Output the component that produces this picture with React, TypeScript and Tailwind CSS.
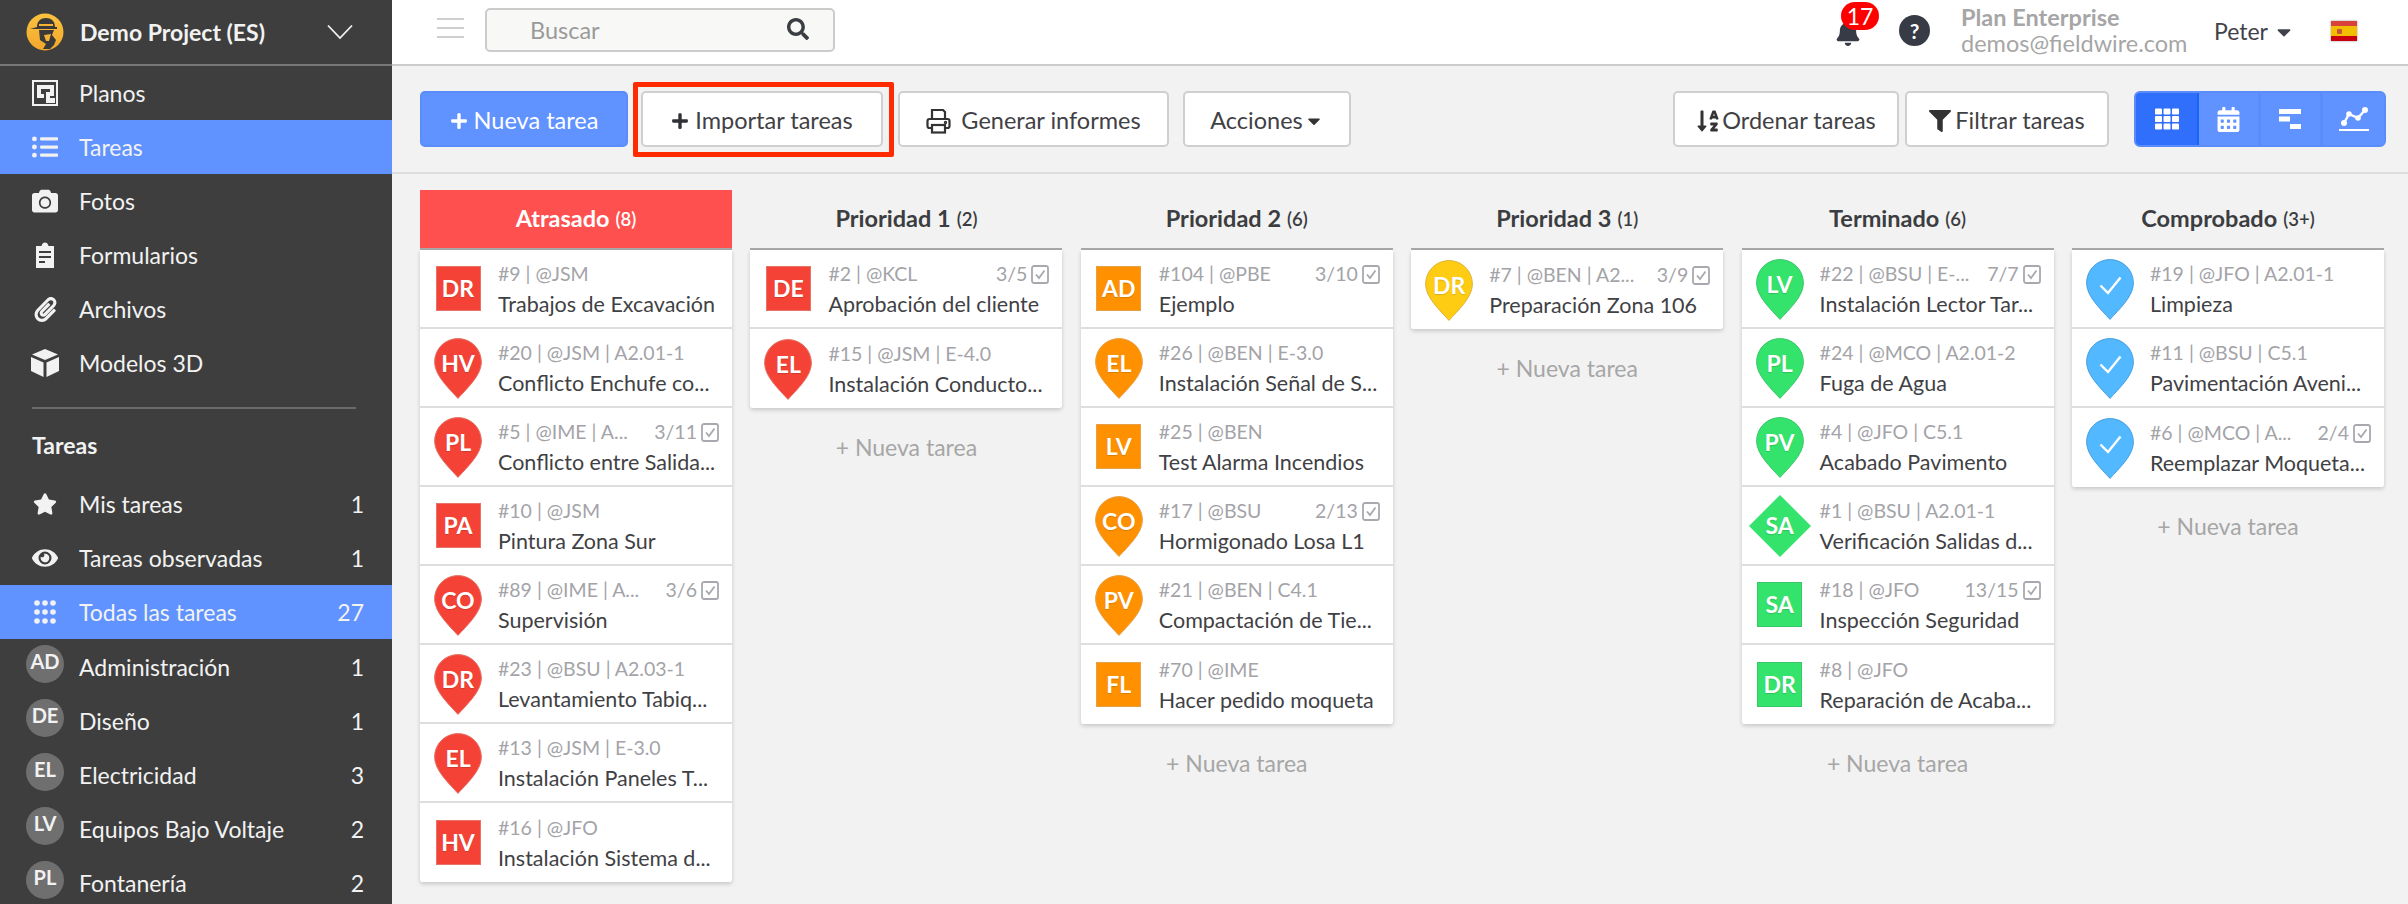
import React from "react";
import { FaListUl, FaCamera, FaPaperclip, FaStar, FaEye, FaBell, FaFilter, FaSearch, FaTh, FaCalendarAlt, FaSortAlphaDown, FaPlus, FaCaretDown } from "react-icons/fa";

type Task = { k: "s" | "p" | "d" | "c"; l: string; m: string; t: string; c?: string };
type Col = { title: string; count: string; color: string; edge: string; tasks: Task[]; red?: boolean };

const cols: Col[] = [
  { title: "Atrasado", count: "(8)", color: "#f44336", edge: "#e57368", red: true, tasks: [
    { k: "s", l: "DR", m: "#9 | @JSM", t: "Trabajos de Excavación" },
    { k: "p", l: "HV", m: "#20 | @JSM | A2.01-1", t: "Conflicto Enchufe co..." },
    { k: "p", l: "PL", m: "#5 | @IME | A...", c: "3/11", t: "Conflicto entre Salida..." },
    { k: "s", l: "PA", m: "#10 | @JSM", t: "Pintura Zona Sur" },
    { k: "p", l: "CO", m: "#89 | @IME | A...", c: "3/6", t: "Supervisión" },
    { k: "p", l: "DR", m: "#23 | @BSU | A2.03-1", t: "Levantamiento Tabiq..." },
    { k: "p", l: "EL", m: "#13 | @JSM | E-3.0", t: "Instalación Paneles T..." },
    { k: "s", l: "HV", m: "#16 | @JFO", t: "Instalación Sistema d..." },
  ]},
  { title: "Prioridad 1", count: "(2)", color: "#f44336", edge: "#e57368", tasks: [
    { k: "s", l: "DE", m: "#2 | @KCL", c: "3/5", t: "Aprobación del cliente" },
    { k: "p", l: "EL", m: "#15 | @JSM | E-4.0", t: "Instalación Conducto..." },
  ]},
  { title: "Prioridad 2", count: "(6)", color: "#ff9100", edge: "#e6a04a", tasks: [
    { k: "s", l: "AD", m: "#104 | @PBE", c: "3/10", t: "Ejemplo" },
    { k: "p", l: "EL", m: "#26 | @BEN | E-3.0", t: "Instalación Señal de S..." },
    { k: "s", l: "LV", m: "#25 | @BEN", t: "Test Alarma Incendios" },
    { k: "p", l: "CO", m: "#17 | @BSU", c: "2/13", t: "Hormigonado Losa L1" },
    { k: "p", l: "PV", m: "#21 | @BEN | C4.1", t: "Compactación de Tie..." },
    { k: "s", l: "FL", m: "#70 | @IME", t: "Hacer pedido moqueta" },
  ]},
  { title: "Prioridad 3", count: "(1)", color: "#ffcc14", edge: "#dcb43c", tasks: [
    { k: "p", l: "DR", m: "#7 | @BEN | A2...", c: "3/9", t: "Preparación Zona 106" },
  ]},
  { title: "Terminado", count: "(6)", color: "#34e36c", edge: "#3ac76a", tasks: [
    { k: "p", l: "LV", m: "#22 | @BSU | E-...", c: "7/7", t: "Instalación Lector Tar..." },
    { k: "p", l: "PL", m: "#24 | @MCO | A2.01-2", t: "Fuga de Agua" },
    { k: "p", l: "PV", m: "#4 | @JFO | C5.1", t: "Acabado Pavimento" },
    { k: "d", l: "SA", m: "#1 | @BSU | A2.01-1", t: "Verificación Salidas d..." },
    { k: "s", l: "SA", m: "#18 | @JFO", c: "13/15", t: "Inspección Seguridad" },
    { k: "s", l: "DR", m: "#8 | @JFO", t: "Reparación de Acaba..." },
  ]},
  { title: "Comprobado", count: "(3+)", color: "#52b8ff", edge: "#4a9fe0", tasks: [
    { k: "c", l: "", m: "#19 | @JFO | A2.01-1", t: "Limpieza" },
    { k: "c", l: "", m: "#11 | @BSU | C5.1", t: "Pavimentación Aveni..." },
    { k: "c", l: "", m: "#6 | @MCO | A...", c: "2/4", t: "Reemplazar Moqueta..." },
  ]},
];

function PinShape({ color, edge }: { color: string; edge: string }) {
  return (
    <svg width="48" height="61" viewBox="0 0 48 61" className="block">
      <path d="M24 .6C37 .6 47.4 11 47.4 24.2 47.4 37.5 32.5 51 24 60.4 15.5 51 .6 37.5 .6 24.2 .6 11 11 .6 24 .6Z" fill={color} stroke={edge} strokeWidth="1" />
    </svg>
  );
}

function Marker({ t, color, edge }: { t: Task; color: string; edge: string }) {
  const label = "text-white font-bold text-[23px] leading-none [text-shadow:0_1px_1px_rgba(0,0,0,0.15)]";
  if (t.k === "s") {
    return (
      <div className={`w-[45px] h-[45px] flex items-center justify-center border ${label}`} style={{ background: color, borderColor: edge }}>
        {t.l}
      </div>
    );
  }
  if (t.k === "d") {
    return (
      <div className="relative w-[62px] h-[62px]">
        <svg width="62" height="62" viewBox="0 0 62 62" className="block">
          <path d="M31 0 62 31 31 62 0 31Z" fill={color} />
        </svg>
        <div className={`absolute inset-0 flex items-center justify-center ${label}`}>{t.l}</div>
      </div>
    );
  }
  return (
    <div className="relative w-[48px] h-[61px] mt-[2px]">
      <PinShape color={color} edge={edge} />
      {t.k === "c" ? (
        <svg className="absolute left-[13px] top-[17px]" width="23" height="19" viewBox="0 0 23 19" fill="none" stroke="#fff" strokeWidth="2.4">
          <path d="M1.5 9.5 9 17 21.5 1.5" />
        </svg>
      ) : (
        <div className={`absolute inset-x-0 top-0 h-[50px] flex items-center justify-center ${label}`}>{t.l}</div>
      )}
    </div>
  );
}

function CheckBox() {
  return (
    <svg width="18" height="19" viewBox="0 0 18 19" fill="none" className="ml-[4px] shrink-0">
      <rect x="1" y="1" width="16" height="17" rx="2" stroke="#a8a8ae" strokeWidth="1.8" />
      <path d="M5 9.5 8 13 13.5 5.5" stroke="#a8a8ae" strokeWidth="1.8" />
    </svg>
  );
}

function Card({ t, col, last }: { t: Task; col: Col; last: boolean }) {
  return (
    <div className={`h-[79px] bg-white flex items-center ${last ? "" : "border-b-2 border-[#dedede]"}`}>
      <div className="w-[78px] shrink-0 flex justify-center -translate-x-[1px]">
        <Marker t={t} color={col.color} edge={col.edge} />
      </div>
      <div className="flex-1 min-w-0 pr-[13px] pt-[3px]">
        <div className="flex items-center justify-between h-[24px] text-[19.5px] text-[#a3a3a8] whitespace-nowrap">
          <span>{t.m}</span>
          {t.c && (
            <span className="flex items-center">
              {t.c}
              <CheckBox />
            </span>
          )}
        </div>
        <div className="mt-[4px] h-[28px] leading-[28px] text-[21.5px] text-[#3f4144] whitespace-nowrap">{t.t}</div>
      </div>
    </div>
  );
}

function Column({ col }: { col: Col }) {
  return (
    <div className="min-w-0">
      <div className={`h-[60px] border-b-2 border-[#a9a9a9] flex items-center justify-center gap-[6px] ${col.red ? "bg-[#ff5050] text-white" : "text-[#3b3d40]"}`}>
        <span className="text-[23.5px] font-bold">{col.title}</span>
        <span className="text-[18.5px] font-semibold pt-[2px]">{col.count}</span>
      </div>
      <div className="rounded-b-[3px] overflow-hidden shadow-[0_2px_4px_rgba(0,0,0,0.18)]">
        {col.tasks.map((t, i) => (
          <Card key={i} t={t} col={col} last={i === col.tasks.length - 1} />
        ))}
      </div>
      <div className="mt-[24px] text-center text-[23px] leading-[30px] text-[#a6a6a6]">+ Nueva tarea</div>
    </div>
  );
}

function PlanIcon() {
  return (
    <svg width="26" height="26" viewBox="0 0 26 26">
      <rect x="1" y="1" width="24" height="24" fill="none" stroke="#f2f2f2" strokeWidth="2" />
      <path d="M5 5H22V16H18V23H14V12H18V9H9V14H12V18H5Z" fill="#f2f2f2" />
      <rect x="18" y="18" width="5" height="5" fill="#f2f2f2" />
    </svg>
  );
}

function ClipIcon() {
  return (
    <svg width="20" height="26" viewBox="0 0 20 26">
      <path fillRule="evenodd" d="M1 4H6.5C7 1.5 8.5.5 10 .5S13 1.5 13.5 4H19V26H1ZM4 9V11H16V9ZM4 14V16H16V14ZM4 19V21H10V19Z" fill="#f2f2f2" />
    </svg>
  );
}

function CubeIcon() {
  return (
    <svg width="28" height="28" viewBox="0 0 28 28" fill="#f2f2f2">
      <path d="M14 0 27 5.5 14 11 1 5.5Z" />
      <path d="M0 8 12.5 13.5V28L0 22Z" />
      <path d="M28 8 15.5 13.5V28L28 22Z" />
    </svg>
  );
}

function DotsIcon() {
  return (
    <svg width="22" height="24" viewBox="0 0 22 24" fill="#f2f2f2">
      {[3, 12, 21].map((y) => [3, 11, 19].map((x) => <circle key={`${x}-${y}`} cx={x} cy={y} r="2.8" />))}
    </svg>
  );
}

function PrinterIcon() {
  return (
    <svg width="25" height="26" viewBox="0 0 25 26" fill="none" stroke="#333" strokeWidth="2.2">
      <path d="M6 11V2H17L19 4V11" />
      <rect x="1.500" y="11" width="22" height="9" rx="2" />
      <rect x="6" y="17" width="13" height="7.500" fill="#fff" />
      <circle cx="19.500" cy="14.500" r=".6" fill="#333" />
    </svg>
  );
}

function NavRow({ icon, label, count, active, avatar }: { icon?: React.ReactNode; label: string; count?: string; active?: boolean; avatar?: boolean }) {
  return (
    <div className={`h-[54px] shrink-0 flex items-center pr-[28px] text-[23px] text-[#f2f2f2] ${active ? "bg-[#6093ff]" : ""}`}>
      {avatar ? (
        <div className="ml-[26px] w-[38px] h-[38px] -translate-y-[2px] rounded-full bg-[#6f6f6f] flex justify-center pt-[5px] text-[20px] leading-[22px] font-bold shrink-0">
          {icon}
        </div>
      ) : (
        <div className="ml-[26px] w-[38px] flex justify-center shrink-0">{icon}</div>
      )}
      <span className={`ml-[15px] flex-1 whitespace-nowrap ${avatar ? "pt-[2px]" : ""}`}>{label}</span>
      {count && <span className={avatar ? "pt-[2px]" : ""}>{count}</span>}
    </div>
  );
}

function Btn({ w, ml, children }: { w: string; ml: string; children: React.ReactNode }) {
  return (
    <div className={`${w} ${ml} h-[56px] shrink-0 bg-white border-2 border-[#cfcfcf] rounded-[5px] flex items-center justify-center gap-[6px] pt-[3px] text-[23.5px] text-[#3f4144] whitespace-nowrap`}>
      {children}
    </div>
  );
}

function GanttIcon() {
  return (
    <svg width="23" height="20" viewBox="0 0 23 20" fill="#fff">
      <rect x="0" y="0" width="22" height="5" />
      <rect x="0" y="7.500" width="11" height="5" />
      <rect x="11" y="15" width="11" height="5" />
    </svg>
  );
}

function ChartIcon() {
  return (
    <svg width="30" height="25" viewBox="0 0 30 25" fill="#fff">
      <path d="M5 16 10 7 19 11 26 3" fill="none" stroke="#fff" strokeWidth="2.4" />
      <circle cx="5" cy="16" r="3" />
      <circle cx="10" cy="7" r="2.8" />
      <circle cx="19" cy="11" r="2.8" />
      <circle cx="26" cy="3" r="3" />
      <rect x="0" y="22" width="30" height="2" />
    </svg>
  );
}

function Logo() {
  return (
    <svg width="38" height="38" viewBox="0 0 38 38" className="shrink-0">
      <defs>
        <linearGradient id="lg" x1="0" y1="0" x2="0" y2="1">
          <stop offset="0" stopColor="#fcc23e" />
          <stop offset="1" stopColor="#f2a72c" />
        </linearGradient>
      </defs>
      <circle cx="19" cy="19" r="18.500" fill="url(#lg)" />
      <path d="M11 14C11 8 15 5 20 5S29 8 29 14H31V16H4L11 14Z" fill="#3a3a3a" />
      <rect x="13" y="11" width="14" height="2" fill="#f5b233" />
      <path d="M13 17H28L26 22 30 27 28 32 24 36H17L20 31 14 27Z" fill="#3a3a3a" />
      <path d="M18 22 25 21 23 28 20 28Z" fill="#f5b233" />
    </svg>
  );
}

function Flag() {
  return (
    <svg width="26" height="20" viewBox="0 0 26 20" className="drop-shadow-[0_0_1px_rgba(0,0,0,0.4)]">
      <rect width="26" height="20" fill="#f1bf00" />
      <rect width="26" height="5" fill="#d9423a" />
      <rect y="15" width="26" height="5" fill="#c8000f" />
      <rect x="6" y="8" width="5" height="5" rx="1" fill="#c8553a" />
    </svg>
  );
}

export default function App() {
  return (
    <div className="w-[2408px] h-[904px] overflow-hidden flex font-[Lato,sans-serif] bg-[#f2f2f2]">
      <aside className="w-[392px] shrink-0 h-full bg-[#3e3e3e] flex flex-col overflow-hidden">
        <div className="h-[66px] shrink-0 border-b-2 border-[#777777] flex items-center pl-[26px] pr-[39px]">
          <Logo />
          <span className="ml-[16px] flex-1 text-[23px] font-bold text-[#f2f2f2] whitespace-nowrap">Demo Project (ES)</span>
          <svg width="26" height="16" viewBox="0 0 26 16" fill="none" stroke="#f2f2f2" strokeWidth="1.800">
            <path d="M1 1.500 13 14 25 1.500" />
          </svg>
        </div>
        <NavRow icon={<PlanIcon />} label="Planos" />
        <NavRow icon={<FaListUl size={26} />} label="Tareas" active />
        <NavRow icon={<FaCamera size={26} />} label="Fotos" />
        <NavRow icon={<ClipIcon />} label="Formularios" />
        <NavRow icon={<FaPaperclip size={25} />} label="Archivos" />
        <NavRow icon={<CubeIcon />} label="Modelos 3D" />
        <div className="mt-[17px] ml-[32px] mr-[36px] h-[2px] shrink-0 bg-[#6b6b6b]" />
        <div className="h-[68px] shrink-0 flex items-center pl-[32px] pt-[5px] text-[23px] font-bold text-[#f2f2f2]">Tareas</div>
        <NavRow icon={<FaStar size={24} />} label="Mis tareas" count="1" />
        <NavRow icon={<FaEye size={26} />} label="Tareas observadas" count="1" />
        <NavRow icon={<DotsIcon />} label="Todas las tareas" count="27" active />
        <NavRow avatar icon="AD" label="Administración" count="1" />
        <NavRow avatar icon="DE" label="Diseño" count="1" />
        <NavRow avatar icon="EL" label="Electricidad" count="3" />
        <NavRow avatar icon="LV" label="Equipos Bajo Voltaje" count="2" />
        <NavRow avatar icon="PL" label="Fontanería" count="2" />
      </aside>

      <main className="flex-1 min-w-0 flex flex-col">
        <header className="h-[66px] shrink-0 bg-white border-b-2 border-[#cccccc] flex items-center">
          <div className="ml-[45px] w-[27px] h-[20px] flex flex-col justify-between -mt-[8px]">
            <div className="h-[2px] bg-[#cfcfcf]" />
            <div className="h-[2px] bg-[#cfcfcf]" />
            <div className="h-[2px] bg-[#cfcfcf]" />
          </div>
          <div className="ml-[21px] w-[350px] h-[44px] -mt-[4px] bg-[#f8f8f6] border-2 border-[#cccccc] rounded-[5px] flex items-center pl-[43px] pr-[24px] justify-between">
            <span className="text-[23.5px] text-[#9a9a9a] pt-[2px]">Buscar</span>
            <FaSearch size={22} className="text-[#3a3d42] -mt-[3px]" />
          </div>
          <div className="ml-auto relative w-[26px] h-[28px] mr-[38px]">
            <FaBell size={26} className="text-[#373b45] absolute left-0 top-[2px]" />
            <div className="absolute left-[6px] -top-[16px] w-[38px] h-[28px] rounded-[14px] bg-[#ff0000] text-white text-[23px] leading-[28px] text-center">17</div>
          </div>
          <div className="w-[31px] h-[31px] -mt-[3px] rounded-full bg-[#373b45] text-white text-[21px] font-bold flex items-center justify-center">?</div>
          <div className="ml-[31px] w-[253px] -mt-[4px] flex flex-col">
            <span className="text-[23.5px] leading-[26px] font-bold text-[#a6a6a6]">Plan Enterprise</span>
            <span className="text-[23.5px] leading-[26px] text-[#a6a6a6]">demos@fieldwire.com</span>
          </div>
          <span className="text-[23px] text-[#3f4349] -mt-[1px]">Peter</span>
          <FaCaretDown size={22} className="ml-[5px] text-[#3f4349]" />
          <div className="ml-[36px] mr-[51px] -mt-[3px]"><Flag /></div>
        </header>

        <div className="h-[108px] shrink-0 border-b-2 border-[#dddddd] flex items-center pl-[28px]">
          <div className="w-[208px] h-[56px] shrink-0 bg-[#6093ff] border-2 border-[#5a8cfa] rounded-[5px] flex items-center justify-center gap-[6px] pt-[3px] text-[23.5px] text-white whitespace-nowrap">
            <FaPlus size={18} />
            Nueva tarea
          </div>
          <div className="relative ml-[13px]">
            <Btn w="w-[242px]" ml="">
              <FaPlus size={18} className="text-[#2f3136]" />
              Importar tareas
            </Btn>
            <div className="absolute -left-[8px] -right-[11px] -top-[9px] -bottom-[10px] border-[5px] border-[#ff2a00] rounded-[2px]" />
          </div>
          <Btn w="w-[271px]" ml="ml-[15px]">
            <span className="mr-[4px]"><PrinterIcon /></span>
            Generar informes
          </Btn>
          <Btn w="w-[168px]" ml="ml-[14px]">
            Acciones
            <FaCaretDown size={20} className="-ml-[5px] text-[#333]" />
          </Btn>
          <Btn w="w-[226px]" ml="ml-[322px]">
            <FaSortAlphaDown size={24} className="text-[#333] -mr-[4px]" />
            Ordenar tareas
          </Btn>
          <Btn w="w-[204px]" ml="ml-[6px]">
            <FaFilter size={22} className="text-[#333] -mr-[2px]" />
            Filtrar tareas
          </Btn>
          <div className="ml-[25px] w-[252px] h-[56px] shrink-0 flex rounded-[6px] overflow-hidden border-2 border-[#5a8cfa] bg-[#6093ff]">
            <div className="w-[63px] bg-[#2f6ffb] border-r-2 border-[#1f62f5] flex items-center justify-center text-white"><FaTh size={24} /></div>
            <div className="w-[62px] border-r-[3px] border-[#5a8cfa] flex items-center justify-center text-white"><FaCalendarAlt size={25} /></div>
            <div className="w-[62px] border-r-[3px] border-[#5a8cfa] flex items-center justify-center"><GanttIcon /></div>
            <div className="flex-1 flex items-center justify-center"><ChartIcon /></div>
          </div>
        </div>

        <div className="pl-[28px] pt-[16px] w-[1992px] grid grid-cols-6 gap-x-[18.4px] items-start">
          {cols.map((c) => (
            <Column key={c.title} col={c} />
          ))}
        </div>
      </main>
    </div>
  );
}
